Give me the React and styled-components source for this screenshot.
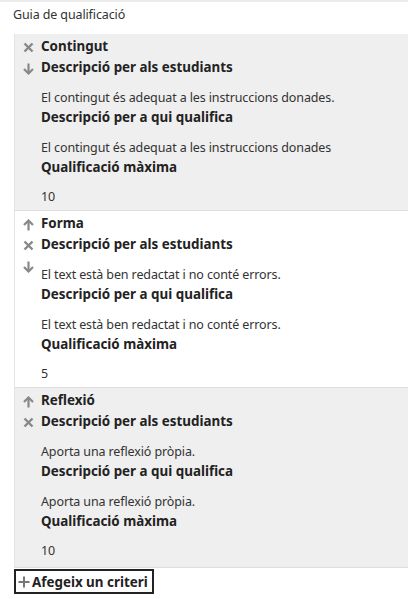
import React from "react";
import styled, { createGlobalStyle } from "styled-components";

const Global = createGlobalStyle`
  body {
    margin: 0;
    background: #fff;
    font-family: "Noto Sans", "Open Sans", sans-serif;
    font-size: 12.5px;
    letter-spacing: -0.12px;
    color: #222;
  }
`;

const Page = styled.div`
  border-top: 2px solid #ececec;
  padding: 3px 0 0 14px;
`;

const Caption = styled.div`
  margin-left: -1px;
  height: 25px;
  line-height: 20px;
  color: #333;
`;

const Panel = styled.div`
  border-left: 1px solid #e4e4e4;
  margin-top: 4px;
`;

const Criterion = styled.div`
  display: flex;
  background: ${(p) => (p.$shade ? "#efefef" : "#fff")};
  border-bottom: 1px solid #dedede;
  padding: 2px 0 3px 6px;
  height: ${(p) => p.$h}px;
  box-sizing: border-box;
`;

const Icons = styled.div`
  width: 20px;
  display: flex;
  flex-direction: column;
  padding-top: 1px;
`;

const IconSlot = styled.div`
  height: 21px;
  display: flex;
  align-items: center;
  justify-content: center;
  width: 14px;
`;

const Body = styled.div`
  display: flex;
  flex-direction: column;
`;

const Title = styled.div`
  font-weight: 700;
  font-size: 13.4px;
  letter-spacing: 0;
  line-height: 21px;
`;

const Text = styled.div`
  line-height: 19px;
  margin-top: 10px;
  color: #333;
`;

const Value = styled(Text)`
  margin-top: 9px;
`;

const AddButton = styled.button`
  display: flex;
  align-items: center;
  gap: 2px;
  margin-top: 1px;
  padding: 0 4px 0 2px;
  height: 25px;
  border: 2px solid #222;
  background: #fff;
  font-family: inherit;
  font-size: 13.4px;
  font-weight: 700;
  color: #222;
`;

const Cross = () => (
  <svg width="11" height="11" viewBox="0 0 11 11">
    <path d="M1.5 1.5 L9.5 9.5 M9.5 1.5 L1.5 9.5" stroke="#888" strokeWidth="2.4" />
  </svg>
);

const Down = () => (
  <svg width="11" height="12" viewBox="0 0 11 12">
    <path d="M5.5 0.5 V10" stroke="#888" strokeWidth="2.2" />
    <path d="M1 6 L5.5 10.5 L10 6" stroke="#888" strokeWidth="2.2" fill="none" />
  </svg>
);

const Up = () => (
  <svg width="11" height="12" viewBox="0 0 11 12">
    <path d="M5.5 11.5 V2" stroke="#888" strokeWidth="2.2" />
    <path d="M1 6 L5.5 1.5 L10 6" stroke="#888" strokeWidth="2.2" fill="none" />
  </svg>
);

const Plus = () => (
  <svg width="12" height="12" viewBox="0 0 12 12">
    <path d="M6 0.5 V11.5 M0.5 6 H11.5" stroke="#777" strokeWidth="2" />
  </svg>
);

const icons = { up: Up, del: Cross, down: Down };

const criteria = [
  {
    title: "Contingut",
    students: "El contingut és adequat a les instruccions donades.",
    graders: "El contingut és adequat a les instruccions donades",
    max: "10",
    icons: ["del", "down"],
    shade: true,
    h: 177,
  },
  {
    title: "Forma",
    students: "El text està ben redactat i no conté errors.",
    graders: "El text està ben redactat i no conté errors.",
    max: "5",
    icons: ["up", "del", "down"],
    shade: false,
    h: 177,
  },
  {
    title: "Reflexió",
    students: "Aporta una reflexió pròpia.",
    graders: "Aporta una reflexió pròpia.",
    max: "10",
    icons: ["up", "del"],
    shade: true,
    h: 180,
  },
];

export default function App() {
  return (
    <>
      <Global />
      <Page>
        <Caption>Guia de qualificació</Caption>
        <Panel>
          {criteria.map((c) => (
            <Criterion key={c.title} $shade={c.shade} $h={c.h}>
              <Icons>
                {c.icons.map((k) => {
                  const I = icons[k];
                  return (
                    <IconSlot key={k}>
                      <I />
                    </IconSlot>
                  );
                })}
              </Icons>
              <Body>
                <Title>{c.title}</Title>
                <Title>Descripció per als estudiants</Title>
                <Text>{c.students}</Text>
                <Title>Descripció per a qui qualifica</Title>
                <Text>{c.graders}</Text>
                <Title>Qualificació màxima</Title>
                <Value>{c.max}</Value>
              </Body>
            </Criterion>
          ))}
        </Panel>
        <AddButton>
          <Plus />
          Afegeix un criteri
        </AddButton>
      </Page>
    </>
  );
}
